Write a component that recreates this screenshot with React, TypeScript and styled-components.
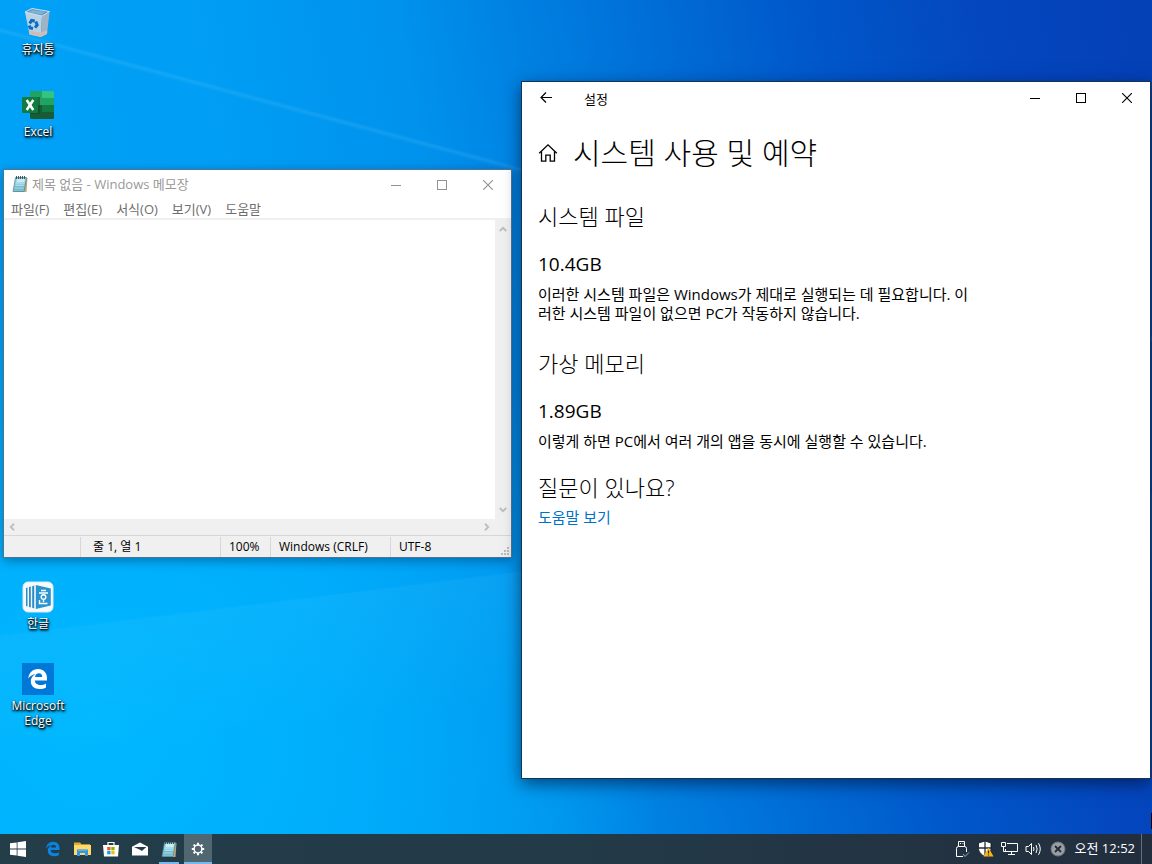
import React from "react";
import styled, { createGlobalStyle } from "styled-components";

const GlobalStyle = createGlobalStyle`
  * { box-sizing: border-box; }
  body {
    margin: 0;
    font-family: "Open Sans", "Noto Sans CJK KR", sans-serif;
    font-size: 12px;
    color: #000;
  }
  button, textarea { font: inherit; color: inherit; border: 0; padding: 0; background: none; }
  h1, h2, h3, p, ul { margin: 0; padding: 0; font-weight: 400; }
  svg { display: block; flex: none; }
`;

const Screen = styled.div`
  min-height: 100vh;
  display: flex;
  flex-direction: column;
  background:
    linear-gradient(195deg, transparent 324px, rgba(120, 210, 255, 0.16) 327px, transparent 331px),
    linear-gradient(173deg, transparent 630px, rgba(120, 220, 255, 0.08) 632px, transparent 760px),
    radial-gradient(ellipse 50% 60% at 8% 85%, #00b8ff 0%, rgba(0, 180, 255, 0.7) 45%, rgba(0, 170, 255, 0) 100%),
    linear-gradient(80deg, #00a4f8 0%, #009ef4 26%, #0092ec 42%, #0074da 58%, #0058ca 73%, #0446be 87%, #0440b6 100%);
`;

const Desktop = styled.main`
  position: relative;
  flex: 1;
`;

const IconGrid = styled.div`
  display: grid;
  grid-template-columns: 76px;
  grid-auto-rows: 82px;
  padding-top: 6px;
`;

const Shortcut = styled.button<{ $row: number }>`
  grid-row: ${(p) => p.$row};
  display: flex;
  flex-direction: column;
  align-items: center;
  align-self: start;
  gap: 2px;
  color: #fff;
  line-height: 15px;
  text-shadow: 0 1px 2px #000, 1px 1px 2px #000, 1px 2px 3px rgba(0, 0, 0, 0.6);
`;

const Window = styled.section`
  position: absolute;
  display: flex;
  flex-direction: column;
  background: #fff;
`;

const NotepadWindow = styled(Window)`
  left: 3px;
  top: 169px;
  width: 509px;
  height: 389px;
  border: 1px solid rgba(20, 70, 110, 0.75);
  box-shadow: 0 3px 10px rgba(0, 30, 70, 0.4);
`;

const SettingsWindow = styled(Window)`
  right: 1px;
  top: 81px;
  width: 630px;
  height: 698px;
  border: 1px solid #17344f;
  box-shadow: 0 5px 16px rgba(0, 15, 50, 0.6);
`;

const ScreenEdge = styled.div`
  position: absolute;
  right: 0;
  bottom: 5px;
  width: 1px;
  height: 16px;
  background: #000;
`;

const TitleBar = styled.header<{ $height: number }>`
  display: flex;
  align-items: center;
  height: ${(p) => p.$height}px;
  flex: none;
`;

const NotepadTitle = styled.h1`
  flex: 1;
  font-size: 13px;
  line-height: 18px;
  color: #999;
  padding: 0 0 2px 4px;
`;

const NotepadIconBox = styled.span`
  padding-left: 8px;
`;

const CaptionButton = styled.button<{ $muted?: boolean }>`
  display: flex;
  align-items: center;
  justify-content: center;
  width: 46px;
  height: 100%;
  color: ${(p) => (p.$muted ? "#929292" : "#000")};
`;

const MenuBar = styled.nav`
  display: flex;
  gap: 14px;
  height: 21px;
  flex: none;
  padding: 1px 0 0 7px;
  border-bottom: 2px solid #f0f0f0;
  color: #6d6d6d;
  font-size: 13px;
  line-height: 18px;
`;

const Editor = styled.div`
  flex: 1;
  display: grid;
  grid-template-columns: 1fr 16px;
  grid-template-rows: 1fr 16px;
  background: #f0f0f0;
`;

const TextArea = styled.textarea`
  resize: none;
  outline: none;
  background: #fff;
  padding: 2px 4px;
  overflow: hidden;
  width: 100%;
  height: 100%;
`;

const ScrollTrack = styled.div<{ $vertical?: boolean }>`
  display: flex;
  flex-direction: ${(p) => (p.$vertical ? "column" : "row")};
  justify-content: space-between;
  padding: ${(p) => (p.$vertical ? 1 : 0)}px 0;
`;

const ScrollButton = styled.button`
  width: 16px;
  height: 16px;
  display: flex;
  align-items: center;
  justify-content: center;
  color: #bfbfbf;
`;

const StatusBar = styled.footer`
  position: relative;
  display: flex;
  justify-content: flex-end;
  flex: none;
  height: 22px;
  padding-top: 1px;
  background: #f0f0f0;
  border-top: 1px solid #d7d7d7;
  line-height: 20px;
`;

const StatusCell = styled.span<{ $width: number; $indent?: boolean }>`
  width: ${(p) => p.$width}px;
  padding-left: ${(p) => (p.$indent ? 12 : 8)}px;
  border-left: 1px solid #d7d7d7;
  white-space: nowrap;
`;

const Grip = styled.span`
  position: absolute;
  right: 1px;
  bottom: 1px;
`;

const BackButton = styled(CaptionButton)`
  width: 48px;
`;

const SettingsTitle = styled.span`
  flex: 1;
  font-size: 13px;
  padding-left: 14px;
`;

const SettingsBody = styled.div`
  padding: 19px 16px;
`;

const PageHeading = styled.div`
  display: flex;
  align-items: center;
  gap: 15px;
  height: 40px;
  margin-bottom: 3px;
`;

const PageTitle = styled.h1`
  font-size: 30px;
  font-weight: 300;
  line-height: 40px;
`;

const Section = styled.section`
  padding-top: 26px;
`;

const SectionTitle = styled.h2`
  font-size: 22px;
  font-weight: 300;
  line-height: 28px;
`;

const Amount = styled.h3`
  font-size: 19px;
  line-height: 24px;
  padding-top: 22px;
`;

const Description = styled.p`
  font-size: 15px;
  line-height: 19px;
  padding-top: 9px;
`;

const HelpSection = styled.section`
  padding-top: 22px;
`;

const HelpLink = styled.a`
  display: inline-block;
  padding-top: 7px;
  font-size: 15px;
  line-height: 19px;
  color: #0072c9;
  text-decoration: none;
`;

const Taskbar = styled.footer`
  display: flex;
  height: 30px;
  flex: none;
  color: #fff;
  background: linear-gradient(90deg, #233d49, #233a48 50%, #222e3e);
`;

const StartButton = styled.button`
  width: 36px;
  display: flex;
  align-items: center;
  justify-content: center;
`;

const AppList = styled.div`
  flex: 1;
  display: flex;
  gap: 1px;
  padding-left: 3px;
`;

const TaskButton = styled.button<{ $active?: boolean; $running?: boolean }>`
  width: 28px;
  display: flex;
  align-items: center;
  justify-content: center;
  background: ${(p) => (p.$active ? "#506670" : "transparent")};
  box-shadow: ${(p) => (p.$active ? "inset 0 -2px #76b9ed" : "none")};
`;

const RunningButton = styled(TaskButton)`
  background: linear-gradient(#76b9ed, #76b9ed) 4px 100% / 20px 2px no-repeat;
`;

const TrayButton = styled.button`
  width: 24px;
  display: flex;
  align-items: center;
  justify-content: center;
`;

const Clock = styled.time`
  padding: 0 6px 0 5px;
  font-size: 13px;
  line-height: 29px;
`;

const ShowDesktop = styled.button`
  width: 11px;
  border-left: 1px solid #67717c;
`;

const NotepadIcon = () => (
  <svg width="16" height="17" viewBox="0 0 16 17">
    <path d="M4 2h11.5l-1 14H2z" fill="#b9a77c" />
    <path d="M3.5 1.5h11L12 15.5H1z" fill="#8fd0e0" stroke="#4d7f90" strokeWidth=".7" />
    <path d="M5 3h8l-.5 3H4.5z" fill="#c9edf3" />
    <path d="M3 9h9.500l-1 5.500H2z" fill="#5fb0c8" opacity=".7" />
    <path d="M4 7h8.500M3.500 9.500H12M3 12h8.500" stroke="#e4f7fa" strokeWidth=".6" />
    <path d="M4.500 0v3M6.500 0v3M8.500 0v3M10.500 0v3M12.500 0v3" stroke="#33494f" strokeWidth=".9" />
  </svg>
);

const Minimize = () => (
  <svg width="10" height="10" viewBox="0 0 10 10" shapeRendering="crispEdges">
    <path d="M0 5.500h10" stroke="currentColor" />
  </svg>
);
const Maximize = () => (
  <svg width="10" height="10" viewBox="0 0 10 10" shapeRendering="crispEdges">
    <rect x=".5" y=".5" width="9" height="9" fill="none" stroke="currentColor" />
  </svg>
);
const Close = () => (
  <svg width="10" height="10" viewBox="0 0 10 10">
    <path d="M0 0l10 10M10 0L0 10" stroke="currentColor" strokeWidth="1.100" />
  </svg>
);

const Caption = ({ muted }: { muted?: boolean }) => (
  <>
    <CaptionButton $muted={muted} aria-label="최소화"><Minimize /></CaptionButton>
    <CaptionButton $muted={muted} aria-label="최대화"><Maximize /></CaptionButton>
    <CaptionButton $muted={muted} aria-label="닫기"><Close /></CaptionButton>
  </>
);

const chevrons = {
  up: "M.8 6L4 2.800 7.200 6",
  down: "M.8 2L4 5.200 7.200 2",
  left: "M6 .8L2.800 4 6 7.200",
  right: "M2 .8L5.200 4 2 7.200",
};

const Chevron = ({ to }: { to: keyof typeof chevrons }) => (
  <ScrollButton aria-label={to}>
    <svg width="8" height="8" viewBox="0 0 8 8">
      <path d={chevrons[to]} fill="none" stroke="currentColor" strokeWidth="2" />
    </svg>
  </ScrollButton>
);

const RecycleBin = () => (
  <svg width="32" height="34" viewBox="0 0 32 34">
    <path d="M3 6l17 4-1.200 21L7.500 28.500z" fill="#b9d3e6" />
    <path d="M20 10l7.500-4L25 28l-6.200 3z" fill="#9fb3c4" />
    <path d="M7 24.500l12.300 2 5.900-2.500-.2 4-6.200 3L7.500 28.500z" fill="#cdbdb8" />
    <path d="M3 6l7-3.500 17.500 3L20 10z" fill="#5c93bd" />
    <path d="M6.500 6l4-2 13 2-4 2.500z" fill="#7fb4d6" />
    <path d="M3 6l7-3.500 17.500 3L20 10z" fill="none" stroke="#dcebf5" strokeWidth=".9" />
    <g fill="none" stroke="#0c6cc0" strokeWidth="3">
      <path d="M7.700 17.500l1.800-3 3.300.6" />
      <path d="M13.800 15.500l1.400 3.500-2.100 2.600" />
      <path d="M11 22.500l-2.800-.6-1-2.400" />
    </g>
  </svg>
);

const ExcelIcon = () => (
  <svg width="32" height="34" viewBox="0 0 32 34">
    <path d="M8 3h12v7H8z" fill="#21a366" />
    <path d="M20 3h10.500q1.500 0 1.500 1.500V10H20z" fill="#33c481" />
    <path d="M8 10h12v7H8z" fill="#21a366" />
    <path d="M20 10h12v7H20z" fill="#21a366" />
    <path d="M8 17h12v7H8z" fill="#185c37" />
    <path d="M20 17h12v7H20z" fill="#107c41" />
    <path d="M8 24h24v5.500q0 1.500-1.500 1.500h-21Q8 31 8 29.500z" fill="#185c37" />
    <path d="M8 9h10v17H8z" fill="#0d4a2a" opacity=".6" />
    <rect y="9" width="16" height="16" rx="1" fill="#107c41" />
    <path d="M4.700 12l6.600 10M11.300 12L4.700 22" stroke="#fff" strokeWidth="2.500" />
  </svg>
);

const HangulIcon = () => (
  <svg width="32" height="34" viewBox="0 0 32 34">
    <rect x="1" y="2" width="30" height="30" rx="5" fill="#f7fafc" stroke="#dce8ee" />
    <path d="M4 8l1.500-.5v19L4 26zM7 7l1.800-.4v20.800L7 27zM10.200 6.200l2-.6v22.800l-2-.6z" fill="#2b8cc9" />
    <path d="M13.800 5l15 3.500v17l-15 3.500z" fill="#2894d0" />
    <path d="M19 10.500h5M17 13h9M17.500 20v3.500h8M21.500 20v2" fill="none" stroke="#fff" strokeWidth="1.400" />
    <circle cx="21.500" cy="17" r="2.300" fill="none" stroke="#fff" strokeWidth="1.400" />
  </svg>
);

const EdgeShape = ({ fill }: { fill: string }) => (
  <path
    d="M1.300 10.500C1.800 5 5.500 1 11 1c5.700 0 9 4 9 9v2.500H7.800c.2 3 2.700 4.500 5.700 4.500 2.100 0 4-.6 5.500-1.600v4.100c-1.800 1-4 1.500-6.500 1.500C7.200 21 3.800 18 3.800 13.500c0-3.500 1.900-6 5-7.500-3.100.3-5.700 1.900-7.500 4.500zM8 9h7.200c0-2.200-1-3.700-3.300-3.700C9.800 5.300 8.400 6.800 8 9z"
    fill={fill}
  />
);

const EdgeTile = () => (
  <svg width="32" height="34" viewBox="0 0 32 34">
    <rect y="1" width="32" height="32" fill="#0078d7" />
    <g transform="translate(5 6)"><EdgeShape fill="#fff" /></g>
  </svg>
);

const WindowsLogo = () => (
  <svg width="16" height="16" viewBox="0 0 16 16">
    <path d="M0 2.300L6.700 1.400v6.200H0zM7.500 1.300L16 .1v7.500H7.500zM0 8.400h6.700v6.200L0 13.700zM7.500 8.400H16v7.500l-8.500-1.200z" fill="#fff" />
  </svg>
);

const FolderIcon = () => (
  <svg width="17" height="16" viewBox="0 0 17 16">
    <path d="M0 1.500h6l1.500 1.700H16V14H0z" fill="#e8a92c" />
    <path d="M0 4h17v10H0z" fill="#ffda6b" />
    <path d="M3 8.500h11V15h-3v-3H6v3H3z" fill="#3b93dc" />
    <path d="M4 8.500h9v1.500H4z" fill="#5aaeee" />
  </svg>
);

const StoreIcon = () => (
  <svg width="16" height="16" viewBox="0 0 16 16">
    <path d="M5 4V1.500h6V4" fill="none" stroke="#fff" strokeWidth="1.200" />
    <path d="M0 4h16l-1 11.500H1z" fill="#fff" />
    <path d="M4.200 6h3.300v3.300H4.200z" fill="#f25022" />
    <path d="M8.300 6h3.300v3.300H8.300z" fill="#7fba00" />
    <path d="M4.200 10h3.300v3.300H4.200z" fill="#00a4ef" />
    <path d="M8.300 10h3.300v3.300H8.300z" fill="#ffb900" />
  </svg>
);

const MailIcon = () => (
  <svg width="16" height="14" viewBox="0 0 17 14">
    <path d="M0 4.500L8.500 0 17 4.500V14H0z" fill="#fff" />
    <path d="M2 4.800h13.200L10.500 9.200 9 8z" fill="#233c49" />
  </svg>
);

const GearIcon = () => (
  <svg width="14" height="14" viewBox="0 0 14 14" fill="none" stroke="#fff">
    <circle cx="7" cy="7" r="3.900" strokeWidth="1.500" />
    <path d="M7 .8v2.200M7 11v2.200M.8 7h2.200M11 7h2.200M2.600 2.600L4 4M10 10l1.400 1.400M2.600 11.400L4 10M10 4l1.400-1.400" strokeWidth="2" />
  </svg>
);

const HomeIcon = () => (
  <svg width="20" height="20" viewBox="0 0 20 20" fill="none" stroke="#000" strokeWidth="1.300">
    <path d="M1.200 10.200L10 1.800l8.800 8.400" />
    <path d="M3.500 8.500v9.700h4.300v-6h4.400v6h4.300V8.500" />
  </svg>
);

const BackArrow = () => (
  <svg width="12" height="12" viewBox="0 0 12 12" fill="none" stroke="#000" strokeWidth="1.200">
    <path d="M12 5.500H1M6 .5l-5 5 5 5" />
  </svg>
);

const UsbIcon = () => (
  <svg width="16" height="18" viewBox="0 0 16 18" fill="none" stroke="#fff">
    <path d="M4.500 6.500v-5h6v5M9 16.500H2.500v-8q0-2 2-2h6q2 0 2 2V12" />
    <path d="M6 3.500h1M8.500 3.500h1" />
    <path d="M9 14l2 2.500 4-4" stroke="#a6adb4" />
  </svg>
);

const ShieldIcon = () => (
  <svg width="17" height="18" viewBox="0 0 17 18">
    <path d="M8 1l6 2v5c0 4-2.500 6.500-6 8.500C4 14.500 1.500 12 1.500 8V3z" fill="#fff" stroke="#111" strokeWidth=".8" />
    <path d="M8 1v15.500M1.500 8H14" stroke="#222e3e" strokeWidth="1.300" />
    <path d="M11.500 7.500l5 9h-10z" fill="#fbb51b" />
    <path d="M11.500 10.500v3M11.500 14.500v1" stroke="#3c2a00" strokeWidth="1.200" />
  </svg>
);

const NetworkIcon = () => (
  <svg width="17" height="16" viewBox="0 0 17 16" fill="none" stroke="#fff">
    <path d="M6 2.500h10.500v8H4.500V8M10.500 10.500v3M7 13.500h7" />
    <path d="M.5 1.500h4v4h-4zM2.500 5.500v5H5" />
  </svg>
);

const VolumeIcon = () => (
  <svg width="18" height="14" viewBox="0 0 18 14" fill="none" stroke="#fff">
    <path d="M1 4.500h2.500l3-3v11l-3-3H1z" />
    <path d="M8.500 5q1 2 0 4M11 3q2.300 4 0 8M13.500 1.200q3.500 5.800 0 11.600" />
  </svg>
);

const DisabledIcon = () => (
  <svg width="16" height="16" viewBox="0 0 16 16">
    <circle cx="8" cy="8" r="7" fill="#9a9fa5" stroke="#6f767e" />
    <path d="M5 5l6 6M11 5l-6 6" stroke="#222b36" strokeWidth="1.800" />
  </svg>
);

const ResizeGrip = () => (
  <svg width="9" height="9" viewBox="0 0 9 9" fill="#bcbcbc">
    <path d="M6 0h2v2H6zM3 3h2v2H3zM6 3h2v2H6zM0 6h2v2H0zM3 6h2v2H3zM6 6h2v2H6z" />
  </svg>
);

export default function App() {
  return (
    <Screen>
      <GlobalStyle />
      <Desktop>
        <IconGrid>
          <Shortcut $row={1}><RecycleBin />휴지통</Shortcut>
          <Shortcut $row={2}><ExcelIcon />Excel</Shortcut>
          <Shortcut $row={8}><HangulIcon />한글</Shortcut>
          <Shortcut $row={9}><EdgeTile /><span>Microsoft<br />Edge</span></Shortcut>
        </IconGrid>

        <NotepadWindow>
          <TitleBar $height={29}>
            <NotepadIconBox><NotepadIcon /></NotepadIconBox>
            <NotepadTitle>제목 없음 - Windows 메모장</NotepadTitle>
            <Caption muted />
          </TitleBar>
          <MenuBar>
            <button>파일(F)</button>
            <button>편집(E)</button>
            <button>서식(O)</button>
            <button>보기(V)</button>
            <button>도움말</button>
          </MenuBar>
          <Editor>
            <TextArea aria-label="텍스트 편집기" spellCheck={false} />
            <ScrollTrack $vertical><Chevron to="up" /><Chevron to="down" /></ScrollTrack>
            <ScrollTrack><Chevron to="left" /><Chevron to="right" /></ScrollTrack>
          </Editor>
          <StatusBar>
            <StatusCell $width={140} $indent>줄 1, 열 1</StatusCell>
            <StatusCell $width={50}>100%</StatusCell>
            <StatusCell $width={120}>Windows (CRLF)</StatusCell>
            <StatusCell $width={121}>UTF-8</StatusCell>
            <Grip><ResizeGrip /></Grip>
          </StatusBar>
        </NotepadWindow>

        <SettingsWindow>
          <TitleBar $height={32}>
            <BackButton aria-label="뒤로"><BackArrow /></BackButton>
            <SettingsTitle>설정</SettingsTitle>
            <Caption />
          </TitleBar>
          <SettingsBody>
            <PageHeading>
              <HomeIcon />
              <PageTitle>시스템 사용 및 예약</PageTitle>
            </PageHeading>
            <Section>
              <SectionTitle>시스템 파일</SectionTitle>
              <Amount>10.4GB</Amount>
              <Description>
                이러한 시스템 파일은 Windows가 제대로 실행되는 데 필요합니다. 이<br />
                러한 시스템 파일이 없으면 PC가 작동하지 않습니다.
              </Description>
            </Section>
            <Section>
              <SectionTitle>가상 메모리</SectionTitle>
              <Amount>1.89GB</Amount>
              <Description>이렇게 하면 PC에서 여러 개의 앱을 동시에 실행할 수 있습니다.</Description>
            </Section>
            <HelpSection>
              <SectionTitle>질문이 있나요?</SectionTitle>
              <HelpLink href="#help">도움말 보기</HelpLink>
            </HelpSection>
          </SettingsBody>
        </SettingsWindow>
        <ScreenEdge />
      </Desktop>

      <Taskbar>
        <StartButton aria-label="시작"><WindowsLogo /></StartButton>
        <AppList>
          <TaskButton aria-label="Microsoft Edge">
            <svg width="16" height="16" viewBox="0 0 22 22"><EdgeShape fill="#0a84e0" /></svg>
          </TaskButton>
          <TaskButton aria-label="파일 탐색기"><FolderIcon /></TaskButton>
          <TaskButton aria-label="스토어"><StoreIcon /></TaskButton>
          <TaskButton aria-label="메일"><MailIcon /></TaskButton>
          <RunningButton aria-label="메모장"><NotepadIcon /></RunningButton>
          <TaskButton $active aria-label="설정"><GearIcon /></TaskButton>
        </AppList>
        <TrayButton aria-label="USB"><UsbIcon /></TrayButton>
        <TrayButton aria-label="보안"><ShieldIcon /></TrayButton>
        <TrayButton aria-label="네트워크"><NetworkIcon /></TrayButton>
        <TrayButton aria-label="볼륨"><VolumeIcon /></TrayButton>
        <TrayButton aria-label="알림"><DisabledIcon /></TrayButton>
        <Clock>오전 12:52</Clock>
        <ShowDesktop aria-label="바탕 화면 보기" />
      </Taskbar>
    </Screen>
  );
}
